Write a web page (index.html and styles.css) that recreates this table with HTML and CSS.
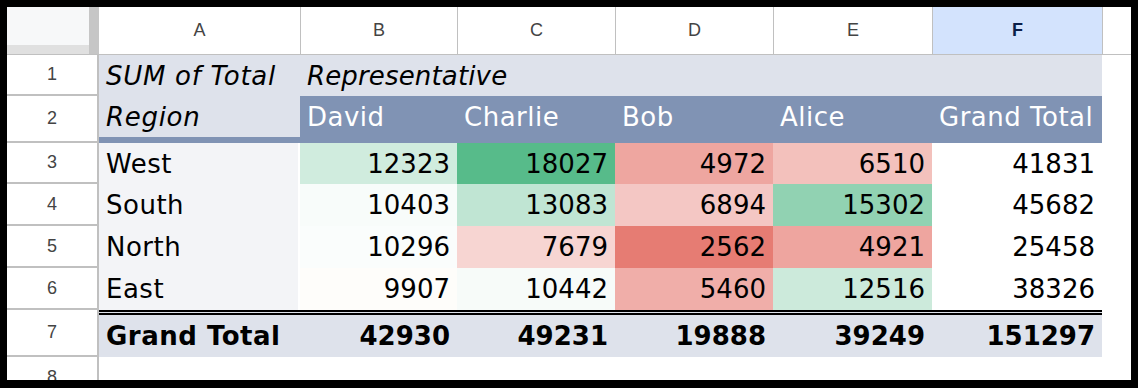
FILE: index.html
```html
<!DOCTYPE html>
<html lang="en">
<head>
<meta charset="utf-8">
<title>Pivot table</title>
<link rel="stylesheet" href="styles.css">
</head>
<body>
<div class="sheet">
  <!-- column headers -->
  <div class="corner"><div class="pane"></div><div class="vbar"></div><div class="hbar"></div></div>
  <div class="colhdr first">A</div>
  <div class="colhdr">B</div>
  <div class="colhdr">C</div>
  <div class="colhdr">D</div>
  <div class="colhdr">E</div>
  <div class="colhdr sel">F</div>
  <div class="colhdr"></div>

  <!-- row 1 -->
  <div class="rowhdr">1</div>
  <div class="cell pale it">SUM of Total</div>
  <div class="cell pale it span5 rep">Representative</div>
  <div class="cell"></div>

  <!-- row 2 -->
  <div class="rowhdr">2</div>
  <div class="cell pale it a2">Region</div>
  <div class="cell dark">David</div>
  <div class="cell dark">Charlie</div>
  <div class="cell dark">Bob</div>
  <div class="cell dark">Alice</div>
  <div class="cell dark">Grand Total</div>
  <div class="cell"></div>

  <!-- row 3 -->
  <div class="rowhdr">3</div>
  <div class="cell label">West</div>
  <div class="cell num" style="background:#d0ecde">12323</div>
  <div class="cell num" style="background:#57bb8a">18027</div>
  <div class="cell num" style="background:#eea6a0">4972</div>
  <div class="cell num" style="background:#f3c1bc">6510</div>
  <div class="cell num">41831</div>
  <div class="cell"></div>

  <!-- row 4 -->
  <div class="rowhdr">4</div>
  <div class="cell label">South</div>
  <div class="cell num" style="background:#f8fcfa">10403</div>
  <div class="cell num" style="background:#c0e5d3">13083</div>
  <div class="cell num" style="background:#f4c7c4">6894</div>
  <div class="cell num" style="background:#91d2b2">15302</div>
  <div class="cell num">45682</div>
  <div class="cell"></div>

  <!-- row 5 -->
  <div class="rowhdr">5</div>
  <div class="cell label">North</div>
  <div class="cell num" style="background:#fafdfc">10296</div>
  <div class="cell num" style="background:#f7d5d2">7679</div>
  <div class="cell num" style="background:#e67c73">2562</div>
  <div class="cell num" style="background:#eea59f">4921</div>
  <div class="cell num">25458</div>
  <div class="cell"></div>

  <!-- row 6 -->
  <div class="rowhdr">6</div>
  <div class="cell label">East</div>
  <div class="cell num" style="background:#fefdfa">9907</div>
  <div class="cell num" style="background:#f7fbf9">10442</div>
  <div class="cell num" style="background:#f0aea9">5460</div>
  <div class="cell num" style="background:#cceadb">12516</div>
  <div class="cell num">38326</div>
  <div class="cell"></div>

  <!-- row 7 -->
  <div class="rowhdr">7</div>
  <div class="cell total">Grand Total</div>
  <div class="cell total num">42930</div>
  <div class="cell total num">49231</div>
  <div class="cell total num">19888</div>
  <div class="cell total num">39249</div>
  <div class="cell total num">151297</div>
  <div class="cell"></div>

  <!-- row 8 -->
  <div class="rowhdr">8</div>
  <div class="cell"></div>
  <div class="cell"></div>
  <div class="cell"></div>
  <div class="cell"></div>
  <div class="cell"></div>
  <div class="cell"></div>
  <div class="cell"></div>
</div>
</body>
</html>
```

FILE: styles.css
```css
* {
  box-sizing: border-box;
}

body {
  margin: 0;
  background: #000;
}

.sheet {
  margin: 7px 0 0 7px;
  width: 1124px;
  height: 373px;
  background: #fff;
  overflow: hidden;
  display: grid;
  grid-template-columns: 92px 201px 157px 158px 158px 159px 170px 29px;
  grid-template-rows: 48px 41px 47px 41px 42px 42px 42px 47px 42px;
  font-family: "DejaVu Sans", Verdana, sans-serif;
  font-size: 26px;
  color: #000;
}

.corner {
  display: grid;
  grid-template-columns: 82px 10px;
  grid-template-rows: 38px 9px;
  border-bottom: 1px solid #c0c0c0;
}

.corner .pane {
  background: #f7f8f9;
}

.corner .vbar {
  grid-column: 2;
  grid-row: 1 / 3;
  background: #c6c6c6;
}

.corner .hbar {
  grid-column: 1;
  grid-row: 2;
  background: #e0e0e0;
}

.colhdr {
  display: flex;
  align-items: center;
  justify-content: center;
  border-bottom: 1px solid #c0c0c0;
  border-left: 1px solid #c0c0c0;
  font-family: "Liberation Sans", Arial, sans-serif;
  font-size: 18px;
  color: #444;
}

.colhdr.first {
  border-left: none;
}

.colhdr.sel {
  background: #d3e3fd;
  color: #0b1f4a;
  font-weight: bold;
}

.rowhdr {
  display: flex;
  align-items: center;
  justify-content: center;
  border-right: 2px solid #c0c0c0;
  border-bottom: 2px solid #c0c0c0;
  font-family: "Liberation Sans", Arial, sans-serif;
  font-size: 18px;
  color: #444;
}

.cell {
  display: flex;
  align-items: center;
  padding: 0 7px;
  white-space: nowrap;
  min-width: 0;
  letter-spacing: 0.5px;
}

.num {
  justify-content: flex-end;
  letter-spacing: 0;
}

.it {
  font-style: italic;
  letter-spacing: 0.7px;
}

.rep {
  letter-spacing: 0.15px;
}

.pale {
  background: #dee2eb;
}

.span5 {
  grid-column: span 5;
}

.a2 {
  border-bottom: 6px solid #8093b4;
}

.dark {
  background: #8093b4;
  color: #fff;
  padding-bottom: 6px;
}

.label {
  background: #f3f4f7;
  border-right: 2px solid #fff;
}

.total {
  background: #dee2eb;
  border-top: 5px double #000;
  font-weight: bold;
}
```
